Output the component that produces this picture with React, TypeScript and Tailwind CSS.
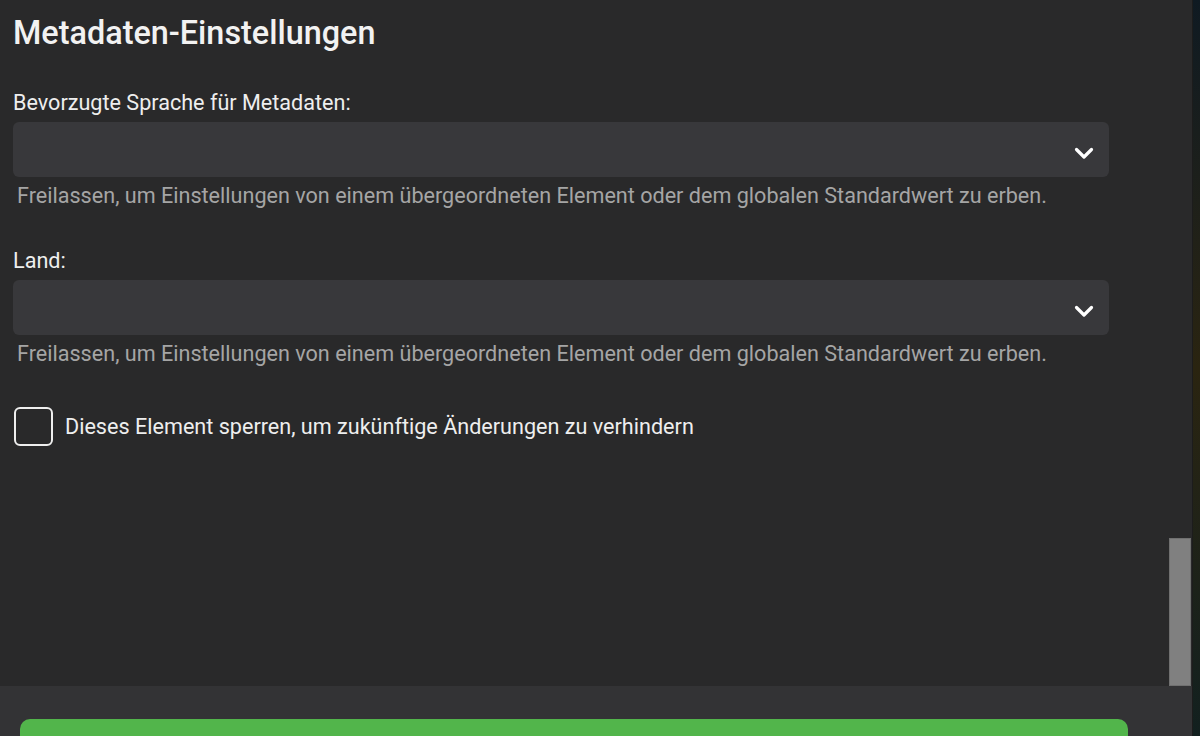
import React from 'react';

function Chevron() {
  return (
    <svg width="20" height="13" viewBox="0 0 20 13" className="shrink-0">
      <polyline points="2.5,2.5 10,10 17.5,2.5" fill="none" stroke="#ffffff" strokeWidth="3.2" strokeLinecap="round" strokeLinejoin="round" />
    </svg>
  );
}

function SelectField({ label }: { label: string }) {
  return (
    <div className="flex flex-col">
      <label className="text-[21.6px] leading-[24px] text-[#eeeeee]">{label}</label>
      <div className="mt-[7px] h-[55px] w-[1096px] rounded-[6px] bg-[#38383b] flex items-center justify-end pr-[15px] pt-[8px]">
        <Chevron />
      </div>
      <p className="mt-[7px] pl-[4px] text-[21.6px] leading-[24px] text-[#a5a5a5]">
        Freilassen, um Einstellungen von einem übergeordneten Element oder dem globalen Standardwert zu erben.
      </p>
    </div>
  );
}

export default function App() {
  return (
    <div
      className="h-[736px] w-[1200px] flex overflow-hidden bg-[#15140f]"
      style={{ fontFamily: 'Roboto, "Noto Sans", sans-serif' }}
    >
      <div className="w-[1193px] shrink-0 flex flex-col bg-[#29292a] border-r border-[#1c1c1c]">
        <div className="h-[686px] shrink-0 flex">
          <div className="flex-1 pl-[13px] pt-[14px]">
            <h1 className="text-[32.4px] leading-[38px] font-medium text-[#f2f2f2]">Metadaten-Einstellungen</h1>
            <div className="mt-[39px] flex flex-col gap-[41px]">
              <SelectField label="Bevorzugte Sprache für Metadaten:" />
              <SelectField label="Land:" />
            </div>
            <label className="mt-[41px] flex items-center gap-[12px] pl-[1px]">
              <span className="h-[39px] w-[39px] rounded-[6px] border-2 border-[#eeeeee]" />
              <span className="text-[21.6px] leading-[24px] text-[#eeeeee]">
                Dieses Element sperren, um zukünftige Änderungen zu verhindern
              </span>
            </label>
          </div>
          <div className="w-[23px] flex flex-col justify-end">
            <div className="h-[148px] w-[22px] bg-[#808080] border border-[#707070]" />
          </div>
        </div>
        <div className="flex-1 min-h-0 overflow-hidden bg-[#333335] px-[20px] pt-[33px]">
          <button className="h-[60px] w-[1108px] rounded-[10px] bg-[#52b54b]" />
        </div>
      </div>
      <div className="flex-1 bg-gradient-to-b from-[#0f1a22] via-[#2a2410] to-[#12201f]" />
    </div>
  );
}
